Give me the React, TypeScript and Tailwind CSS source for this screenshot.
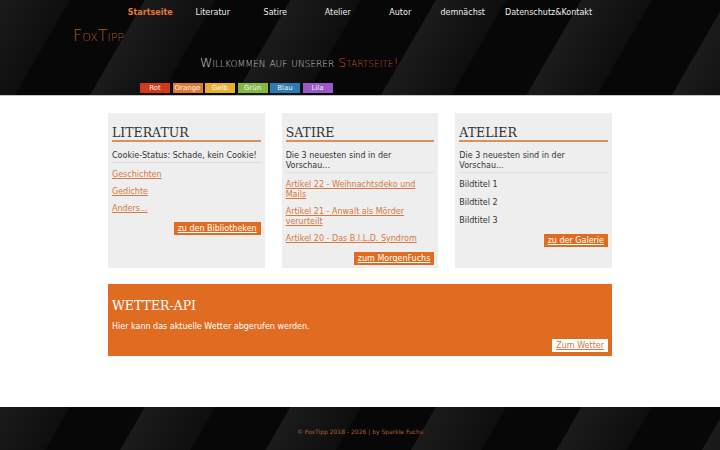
import React from 'react';

const navItems = ['Literatur', 'Satire', 'Atelier', 'Autor', 'demnächst'];

const themes = [
  { label: 'Rot', cls: 'bg-[#d23a17]' },
  { label: 'Orange', cls: 'bg-[#e07a2e]' },
  { label: 'Gelb', cls: 'bg-[#e6b02e]' },
  { label: 'Grün', cls: 'bg-[#84b83f]' },
  { label: 'Blau', cls: 'bg-[#2e7bb0]' },
  { label: 'Lila', cls: 'bg-[#9a58c8]' },
];

const stripes =
  'bg-[repeating-linear-gradient(120deg,#1b1b1b_0px,#0e0e0e_60px,#070707_61px,#070707_125px,#1b1b1b_126px)]';

const Card: React.FC<{ title: string; intro: string; button: string; children: React.ReactNode }> = ({
  title,
  intro,
  button,
  children,
}) => (
  <div className="bg-[#eeeeee] px-[4px] pt-[13px] h-[155px] flex flex-col">
    <h2 className="font-['DejaVu_Serif',serif] text-[12.5px] leading-[14px] text-[#333] border-b-2 border-[#d9925f]">
      {title}
    </h2>
    <p className="mt-[9px] leading-[10px] pb-[1px] border-b border-[#dcdcdc]">{intro}</p>
    <div className="flex flex-col gap-[7px] mt-[7px]">{children}</div>
    <div className="flex justify-end mt-[8px]">
      <a className="bg-[#e06c22] text-white underline px-[4px] leading-[13px]">{button}</a>
    </div>
  </div>
);

const Link: React.FC<{ children: React.ReactNode }> = ({ children }) => (
  <a className="text-[#d6773c] underline leading-[10px]">{children}</a>
);

export default function App() {
  return (
    <div className="min-h-[450px] w-[720px] bg-white font-['DejaVu_Sans',sans-serif] text-[8px] text-[#333] flex flex-col">
      <header className={`h-[96px] ${stripes} border-b border-[#c4c4c4] flex flex-col`}>
        <nav className="flex items-center pt-[8px] pl-[119px] text-[8px] leading-[10px] text-[#eeeeee]">
          <span className="w-[62.5px] text-center font-bold text-[#e8793a]">Startseite</span>
          {navItems.map((n) => (
            <span key={n} className="w-[62.5px] text-center">
              {n}
            </span>
          ))}
          <span className="ml-[11px]">Datenschutz&amp;Kontakt</span>
        </nav>
        <div className="ml-[73px] mt-[8px] text-[16px] leading-[20px] font-extralight [font-variant:small-caps] text-[#a5562a]">
          FoxTipp
        </div>
        <div className="ml-[200px] mt-[10px] text-[12.5px] leading-[14px] font-extralight [font-variant:small-caps] text-[#c9c9c9]">
          Willkommen auf unserer <span className="text-[#b5562a]">Startseite!</span>
        </div>
        <div className="ml-[140px] mt-[13px] flex gap-[2.5px]">
          {themes.map((t) => (
            <span
              key={t.label}
              className={`${t.cls} w-[30px] h-[10px] text-center text-[7px] leading-[10px] text-[#f4f4f4]`}
            >
              {t.label}
            </span>
          ))}
        </div>
      </header>

      <main className="w-[504px] mx-auto pt-[17px] pb-[50px] flex flex-col gap-[16px]">
        <div className="grid grid-cols-3 gap-[17px]">
          <Card title="LITERATUR" intro="Cookie-Status: Schade, kein Cookie!" button="zu den Bibliotheken">
            <Link>Geschichten</Link>
            <Link>Gedichte</Link>
            <Link>Anders...</Link>
          </Card>
          <Card title="SATIRE" intro="Die 3 neuesten sind in der Vorschau..." button="zum MorgenFuchs">
            <Link>Artikel 22 - Weihnachtsdeko und Mails</Link>
            <Link>Artikel 21 - Anwalt als Mörder verurteilt</Link>
            <Link>Artikel 20 - Das B.I.L.D. Syndrom</Link>
          </Card>
          <Card title="ATELIER" intro="Die 3 neuesten sind in der Vorschau..." button="zu der Galerie">
            <span className="leading-[10px]">Bildtitel 1</span>
            <span className="leading-[10px] mt-[1px]">Bildtitel 2</span>
            <span className="leading-[10px] mt-[1px]">Bildtitel 3</span>
          </Card>
        </div>

        <section className="bg-[#e06c22] h-[72px] px-[4px] pt-[15px] text-white flex flex-col">
          <h2 className="font-['DejaVu_Serif',serif] text-[12.5px] leading-[14px]">WETTER-API</h2>
          <p className="mt-[9px] leading-[10px]">Hier kann das aktuelle Wetter abgerufen werden.</p>
          <div className="flex justify-end mt-[7px]">
            <a className="bg-white text-[#d6773c] underline px-[4px] leading-[13px]">Zum Wetter</a>
          </div>
        </section>
      </main>

      <footer className={`mt-auto h-[43px] ${stripes} flex items-center justify-center pt-[5px] text-[6px] text-[#b5602e]`}>
        © FoxTipp 2018 - 2026 | by Sparkle Fuchs
      </footer>
    </div>
  );
}
